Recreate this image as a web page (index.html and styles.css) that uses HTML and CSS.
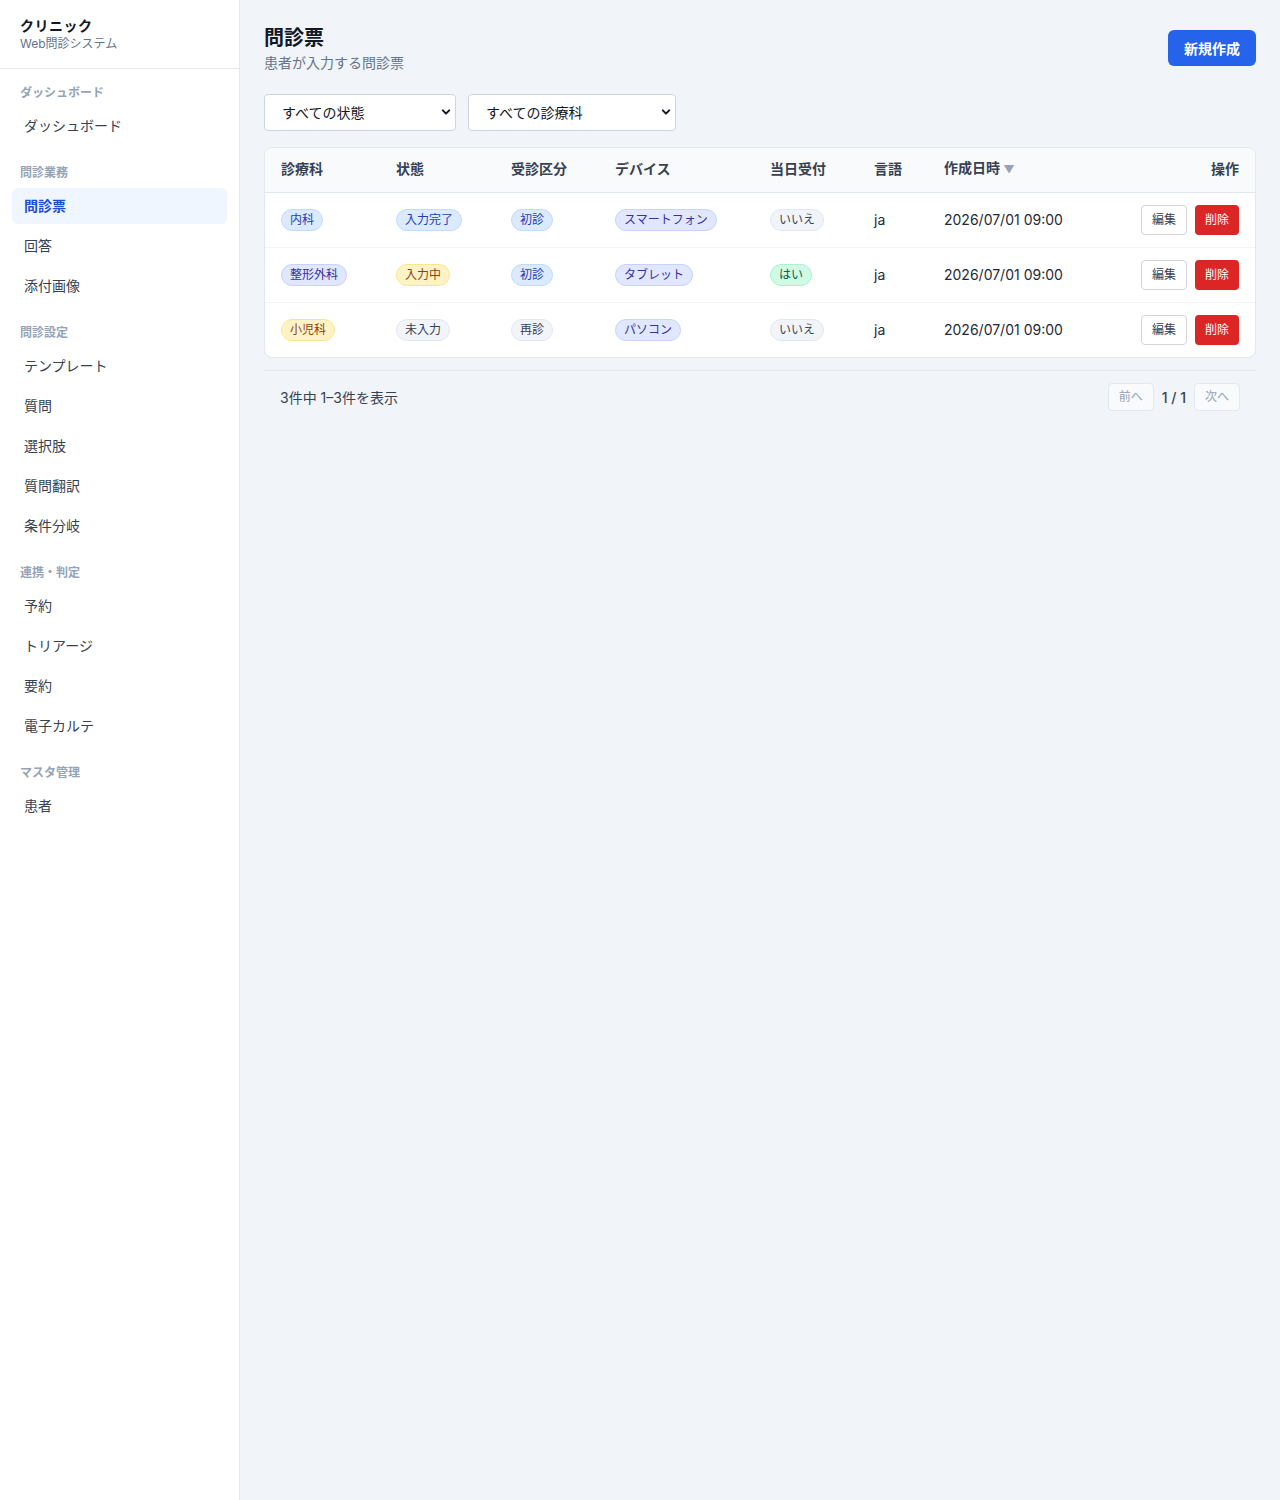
FILE: index.html
```html
<!DOCTYPE html>
<html lang="ja">
<head>
<meta charset="utf-8">
<title>問診票</title>
<link rel="stylesheet" href="styles.css">
</head>
<body>
<div class="app">
  <aside class="sidebar">
    <div class="brand">
      <div class="brand-name">クリニック</div>
      <div class="brand-sub">Web問診システム</div>
    </div>
    <nav class="nav">
      <div class="nav-section">
        <div class="nav-label">ダッシュボード</div>
        <a class="nav-item">ダッシュボード</a>
      </div>
      <div class="nav-section">
        <div class="nav-label">問診業務</div>
        <a class="nav-item active">問診票</a>
        <a class="nav-item">回答</a>
        <a class="nav-item">添付画像</a>
      </div>
      <div class="nav-section">
        <div class="nav-label">問診設定</div>
        <a class="nav-item">テンプレート</a>
        <a class="nav-item">質問</a>
        <a class="nav-item">選択肢</a>
        <a class="nav-item">質問翻訳</a>
        <a class="nav-item">条件分岐</a>
      </div>
      <div class="nav-section">
        <div class="nav-label">連携・判定</div>
        <a class="nav-item">予約</a>
        <a class="nav-item">トリアージ</a>
        <a class="nav-item">要約</a>
        <a class="nav-item">電子カルテ</a>
      </div>
      <div class="nav-section">
        <div class="nav-label">マスタ管理</div>
        <a class="nav-item">患者</a>
      </div>
    </nav>
  </aside>

  <main class="main">
    <div class="page-head">
      <div>
        <h1 class="title">問診票</h1>
        <p class="subtitle">患者が入力する問診票</p>
      </div>
      <button class="btn-primary">新規作成</button>
    </div>

    <div class="filters">
      <div class="select w-status">
        <span>すべての状態</span>
        <svg class="chev" width="10" height="10" viewBox="0 0 10 10"><path d="M1.8 3.4 L5 6.6 L8.2 3.4" fill="none" stroke="#111827" stroke-width="2" stroke-linecap="round" stroke-linejoin="round"/></svg>
      </div>
      <div class="select w-dept">
        <span>すべての診療科</span>
        <svg class="chev" width="10" height="10" viewBox="0 0 10 10"><path d="M1.8 3.4 L5 6.6 L8.2 3.4" fill="none" stroke="#111827" stroke-width="2" stroke-linecap="round" stroke-linejoin="round"/></svg>
      </div>
    </div>

    <div class="card">
      <table class="table">
        <colgroup>
          <col class="c1"><col class="c2"><col class="c3"><col class="c4"><col class="c5"><col class="c6"><col class="c7"><col class="c8">
        </colgroup>
        <thead>
          <tr>
            <th>診療科</th>
            <th>状態</th>
            <th>受診区分</th>
            <th>デバイス</th>
            <th>当日受付</th>
            <th>言語</th>
            <th>作成日時 <span class="sort">▼</span></th>
            <th class="right">操作</th>
          </tr>
        </thead>
        <tbody>
          <tr>
            <td><span class="badge blue">内科</span></td>
            <td><span class="badge blue">入力完了</span></td>
            <td><span class="badge blue">初診</span></td>
            <td><span class="badge indigo">スマートフォン</span></td>
            <td><span class="badge gray">いいえ</span></td>
            <td>ja</td>
            <td>2026/07/01 09:00</td>
            <td class="right"><div class="actions"><button class="btn-edit">編集</button><button class="btn-del">削除</button></div></td>
          </tr>
          <tr>
            <td><span class="badge indigo">整形外科</span></td>
            <td><span class="badge amber">入力中</span></td>
            <td><span class="badge blue">初診</span></td>
            <td><span class="badge indigo">タブレット</span></td>
            <td><span class="badge green">はい</span></td>
            <td>ja</td>
            <td>2026/07/01 09:00</td>
            <td class="right"><div class="actions"><button class="btn-edit">編集</button><button class="btn-del">削除</button></div></td>
          </tr>
          <tr>
            <td><span class="badge amber">小児科</span></td>
            <td><span class="badge gray">未入力</span></td>
            <td><span class="badge gray">再診</span></td>
            <td><span class="badge indigo">パソコン</span></td>
            <td><span class="badge gray">いいえ</span></td>
            <td>ja</td>
            <td>2026/07/01 09:00</td>
            <td class="right"><div class="actions"><button class="btn-edit">編集</button><button class="btn-del">削除</button></div></td>
          </tr>
        </tbody>
      </table>
    </div>

    <div class="pager">
      <span class="pager-info">3件中 1–3件を表示</span>
      <div class="pager-nav">
        <button class="btn-page" disabled>前へ</button>
        <span class="page-num">1 / 1</span>
        <button class="btn-page" disabled>次へ</button>
      </div>
    </div>
  </main>
</div>
</body>
</html>
```

FILE: styles.css
```css
* { box-sizing: border-box; }
html, body { margin: 0; padding: 0; }
body {
  font-family: "Inter", "Noto Sans CJK JP", sans-serif;
  color: #1f2937;
  background: #f1f5f9;
}
.app { display: flex; min-height: 1500px; }

.sidebar {
  width: 240px;
  flex: 0 0 240px;
  background: #ffffff;
  border-right: 1px solid #e5e7eb;
}
.brand {
  height: 69px;
  padding: 16px 20px 0;
  border-bottom: 1px solid #e5e7eb;
}
.brand-name { font-size: 14px; line-height: 20px; font-weight: 700; color: #111827; letter-spacing: 0.5px; }
.brand-sub { font-size: 12px; line-height: 16px; color: #64748b; }

.nav { padding: 16px 12px; }
.nav-section { margin-bottom: 21px; }
.nav-label {
  font-size: 12px; line-height: 16px; font-weight: 700;
  color: #94a3b8; padding: 0 8px; margin-bottom: 7px;
}
.nav-item {
  display: block; height: 36px; line-height: 36px;
  padding: 0 12px; margin-bottom: 4px;
  font-size: 14px; color: #374151; border-radius: 6px;
}
.nav-item.active { background: #eff6ff; color: #1d4ed8; font-weight: 600; }

.main { flex: 1; padding: 24px 24px; }
.page-head { display: flex; justify-content: space-between; align-items: flex-start; }
.title { margin: 0; font-size: 20px; line-height: 28px; font-weight: 700; color: #111827; }
.subtitle { margin: 1px 0 0; font-size: 14px; line-height: 20px; color: #64748b; }
.btn-primary {
  margin-top: 6px;
  height: 36px; padding: 0 16px; border: none; border-radius: 6px;
  background: #2563eb; color: #fff; font-family: inherit;
  font-size: 14px; font-weight: 600;
}

.filters { display: flex; gap: 12px; margin-top: 21px; }
.select {
  display: flex; align-items: center; justify-content: space-between;
  height: 37px; padding: 0 4px 1px 17px;
  background: #fff; border: 1px solid #cbd5e1; border-radius: 4px;
  font-size: 14px; color: #111827;
}
.w-status { width: 192px; }
.w-dept { width: 208px; }

.card {
  margin-top: 16px;
  background: #fff; border: 1px solid #e2e8f0; border-radius: 8px;
  overflow: hidden;
}
.table { width: 100%; border-collapse: separate; border-spacing: 0; table-layout: fixed; }
.c1 { width: 115px; } .c2 { width: 115px; } .c3 { width: 104px; } .c4 { width: 155px; }
.c5 { width: 104px; } .c6 { width: 70px; } .c7 { width: 180px; } .c8 { width: auto; }
th {
  text-align: left; font-size: 14px; line-height: 20px; font-weight: 700;
  color: #374151; padding: 10px 16px 13px; background: #f8fafc;
  border-bottom: 1px solid #e2e8f0; height: 44px;
}
td {
  font-size: 14px; line-height: 20px; color: #1f2937;
  padding: 12px 16px; height: 55px; vertical-align: middle;
  border-bottom: 1px solid #f1f5f9; white-space: nowrap;
}
tbody tr:last-child td { border-bottom: none; height: 54px; }
.right { text-align: right; }
.sort { color: #94a3b8; font-size: 11px; }

.badge {
  display: inline-block; height: 22px; line-height: 20px;
  padding: 0 8px; border-radius: 999px; border: 1px solid;
  font-size: 12px; white-space: nowrap;
}
.blue { background: #dbeafe; border-color: #bfdbfe; color: #1e40af; }
.indigo { background: #e0e7ff; border-color: #c7d2fe; color: #3730a3; }
.amber { background: #fef3c7; border-color: #fde68a; color: #92400e; }
.gray { background: #f1f5f9; border-color: #e2e8f0; color: #374151; }
.green { background: #d1fae5; border-color: #a7f3d0; color: #065f46; }

.actions { display: flex; justify-content: flex-end; gap: 8px; }
.btn-edit, .btn-del {
  display: flex; align-items: center; justify-content: center;
  height: 30px; padding: 0 10px 1px; border-radius: 4px; line-height: 16px;
  font-family: inherit; font-size: 12px; white-space: nowrap;
}
.btn-edit { background: #fff; border: 1px solid #d1d5db; color: #374151; }
.btn-del { background: #dc2626; border: none; color: #fff; }

.pager {
  margin-top: 12px; border-top: 1px solid #e2e8f0;
  padding: 12px 16px 11px; display: flex; justify-content: space-between; align-items: center;
}
.pager-info { font-size: 14px; color: #374151; }
.pager-nav { display: flex; align-items: center; gap: 8px; }
.btn-page {
  display: flex; align-items: center; justify-content: center;
  height: 28px; padding: 0 10px 1px; border: 1px solid #e2e8f0; border-radius: 4px; line-height: 16px;
  background: #f8fafc; color: #94a3b8; font-family: inherit; font-size: 12px;
}
.page-num { font-size: 14px; color: #374151; font-weight: 500; }
```
